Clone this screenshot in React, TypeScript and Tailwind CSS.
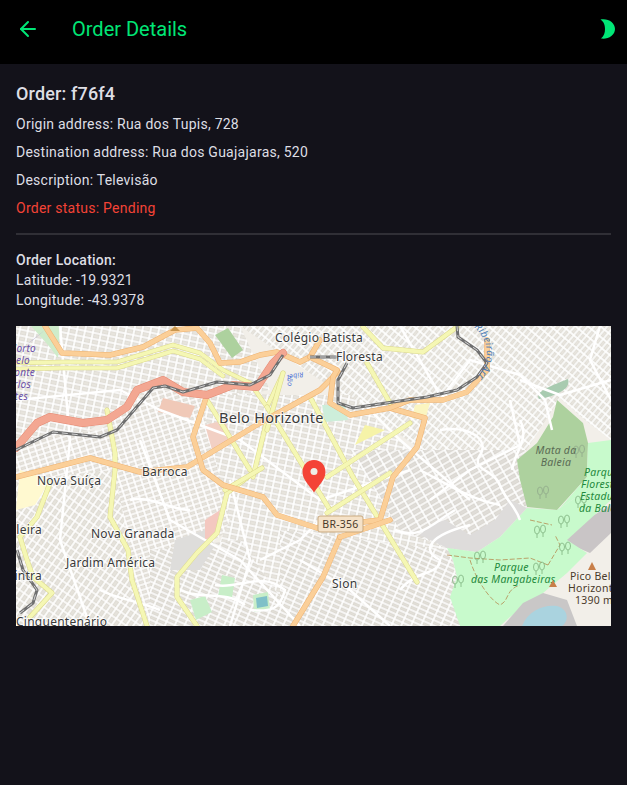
import React from 'react';
import { ArrowLeft } from 'lucide-react';

const Road = ({ d, casing, fill, w }: { d: string; casing: string; fill: string; w: number }) => (
  <>
    <path d={d} fill="none" stroke={casing} strokeWidth={w + 1} strokeLinecap="round" strokeLinejoin="round" />
    <path d={d} fill="none" stroke={fill} strokeWidth={w} strokeLinecap="round" strokeLinejoin="round" />
  </>
);

const ORANGE = [
  'M45 326L62 353L110 355L143 347L175 330L197 328L210 343L220 363L240 362L260 355L277 352L300 362L310 357L320 340',
  'M16 477L90 458L140 472L187 467L260 423L320 390L338 372',
  'M207 395L193 437L203 470L223 485L263 497L277 515L317 528L363 522L380 520L393 477L417 447L425 418L390 408',
  'M487 340L487 370L467 392L443 400L410 400L390 408L350 415L330 403L333 377L337 370L310 357',
  'M340 537L323 577L293 626',
  'M390 520L340 537',
];
const YELLOW = [
  'M16 363L63 362L117 362L173 345L200 353L223 370L250 383L267 407L283 373',
  'M16 369L63 368L117 368L173 351L200 359L223 376',
  'M107 410L115 453L115 470L110 517L128 550L132 580L147 626',
  'M257 470L227 493L217 533L197 553L177 577L177 597L197 626',
  'M50 483L37 517L20 537L27 560L33 577L52 593L30 617',
  'M207 400L250 470',
  'M267 420L253 477',
  'M267 407L330 510',
  'M310 397L353 477L417 582',
  'M327 513L390 473',
  'M327 477L410 423',
  'M363 327L383 348L423 352L457 327',
  'M367 363L390 403',
  'M283 373L267 430',
  'M225 490L262 468',
];
const PINK = 'M16 448L37 423L50 417L83 423L107 420L127 407L137 390L163 380L183 392L207 395L233 385L257 387L273 363L283 353';
const GREY = [
  'M16 450L53 432L100 437L117 430L153 388L165 386L183 392L217 382L250 385L270 375L283 355',
  'M347 363L338 380L338 403L353 408L393 402L427 397L457 390L477 377L487 363L477 350L458 337L457 326',
  'M310 357L338 357',
  'M17 550L23 570L37 590L33 603L20 613',
];
const STREETS = [
  'M16 400L120 390L160 410L240 440L320 500L410 470',
  'M60 326L70 440L60 540L90 626',
  'M140 440L170 520L240 560L300 626',
  'M230 480L250 560L230 626',
  'M440 400L470 360L520 375L545 400L552 430',
  'M430 500L470 470L520 445L510 400',
  'M300 560L350 590L390 626',
  'M360 400L400 440L470 500',
  'M520 380L560 395L611 380',
  'M600 326L590 360L611 400',
  'M400 326L440 395',
  'M260 560L300 540L330 510',
  'M440 430C470 425 490 440 480 455C470 470 495 470 500 485',
  'M500 485C505 500 515 505 520 520',
  'M400 590C415 570 440 575 440 560C420 550 430 535 470 525',
  'M215 585C240 590 260 570 285 590C280 610 270 612 250 610',
  'M180 590C200 600 225 590 245 605',
  'M130 500C150 495 170 510 190 510',
  'M100 590C120 600 135 600 160 610',
  'M395 530C420 540 430 525 455 510',
  'M420 470C440 480 470 500 500 505',
  'M520 420C530 440 515 450 512 470',
];

// street texture regions, filled with a rotated block pattern
const BLOCKS: [string, string][] = [
  ['16,326 240,326 270,390 210,400 140,395 90,430 16,450', 'url(#blocksA)'],
  ['16,440 100,430 150,390 280,395 270,500 215,540 150,626 16,626', 'url(#blocksB)'],
  ['16,480 115,470 135,580 150,626 16,626', 'url(#blocksC)'],
  ['240,326 611,326 611,440 585,420 560,398 520,460 450,470 350,400', 'url(#blocksD)'],
  ['200,395 350,395 430,470 490,520 440,560 400,626 180,626 230,520', 'url(#blocksA)'],
  ['280,530 450,550 470,626 280,626', 'url(#blocksE)'],
  ['150,550 240,540 300,626 150,626', 'url(#blocksE)'],
  ['350,450 525,450 530,505 477,552 447,548 400,530', 'url(#blocksF)'],
];

const Label = ({ x, y, size = 12, anchor, children }: { x: number; y: number; size?: number; anchor?: 'middle' | 'end'; children: React.ReactNode }) => (
  <text x={x} y={y} fontSize={size} textAnchor={anchor} fill="#3a3a3a" stroke="#ffffff" strokeOpacity={0.75} strokeWidth={2} paintOrder="stroke" fontFamily="'Noto Sans', sans-serif">
    {children}
  </text>
);

const Trees = ({ x, y, color = '#7fb27f' }: { x: number; y: number; color?: string }) => (
  <g fill="none" stroke={color} strokeWidth={0.8}>
    <ellipse cx={x} cy={y} rx={2.5} ry={4} />
    <path d={`M${x} ${y + 4}V${y + 8}`} />
    <ellipse cx={x + 6} cy={y - 1} rx={2.5} ry={4} />
    <path d={`M${x + 6} ${y + 3}V${y + 7}`} />
  </g>
);

const Blocks = ({ id, w, h, angle, fill }: { id: string; w: number; h: number; angle: number; fill: string }) => (
  <pattern id={id} width={w} height={h} patternUnits="userSpaceOnUse" patternTransform={`rotate(${angle})`}>
    <rect width={w} height={h} fill={fill} />
    <rect x={1} y={1} width={w - 2} height={h - 2} fill="none" stroke="#c9c5bd" strokeWidth={0.35} />
    <path d={`M0 0H${w}M0 ${h}H${w}M0 0V${h}M${w} 0V${h}`} stroke="#ffffff" strokeWidth={1.7} />
  </pattern>
);

const MapView = () => (
  <svg viewBox="16 326 595 300" className="block w-full h-[300px]" xmlns="http://www.w3.org/2000/svg">
    <defs>
      <Blocks id="blocksA" w={8} h={6} angle={12} fill="#e7e4dd" />
      <Blocks id="blocksB" w={7} h={5} angle={-18} fill="#e6e3dc" />
      <Blocks id="blocksC" w={6} h={8} angle={35} fill="#e5e2db" />
      <Blocks id="blocksD" w={8} h={5} angle={-50} fill="#e8e5de" />
      <Blocks id="blocksE" w={9} h={5} angle={24} fill="#e2dfd8" />
      <Blocks id="blocksF" w={10} h={6} angle={-30} fill="#dfdcd7" />
      <path id="arrudas" d="M474 327C488 340 492 358 478 376" />
      <path id="arrudasWest" d="M303 372L287 375L289 402" />
    </defs>

    <rect x="16" y="326" width="595" height="300" fill="#f2efe9" />
    {BLOCKS.map(([points, fill], i) => (
      <polygon key={i} points={points} fill={fill} />
    ))}

    {/* parks, quarries, water */}
    <polygon points="470,535 445,520 430,525 420,535 447,548 477,552 500,537 527,508 510,500 495,520" fill="#dedcdb" />
    <polygon points="175,540 205,530 215,545 200,570 170,570" fill="#dedddb" />
    <polygon points="555,538 611,505 611,533 590,553" fill="#c9c5c6" />
    <polygon points="447,548 477,552 500,537 527,508 557,510 587,490 611,477 611,500 567,540 587,553 567,573 543,593 510,617 500,626 460,626 450,597 457,577 453,560" fill="#c8facc" />
    <polygon points="557,400 583,423 588,443 587,477 557,510 527,507 520,480 517,460 537,443 553,417" fill="#add19e" />
    <polygon points="588,443 611,440 611,482 587,490 560,508 587,477" fill="#c8facc" />
    <polygon points="503,626 523,603 543,593 567,600 577,626" fill="#c9c7c7" />
    <path d="M522 626C528 610 545 604 557 606C570 610 568 622 562 626Z" fill="#aad3df" />
    <path d="M539 399C535 392 548 387 568 379C570 385 566 390 556 394C550 397 544 398 539 399Z" fill="#a8cbb0" />
    <polygon points="215,335 228,328 243,350 232,358" fill="#add19e" />
    <polygon points="31,326 60,326 58,358 48,345" fill="#cfeccb" />
    <polygon points="163,398 195,406 190,418 158,412" fill="#f0c9b8" />
    <polygon points="205,425 225,420 232,440 212,450" fill="#f2d0c4" />
    <polygon points="26,345 45,330 33,340" fill="#a9a3c9" />
    <polygon points="20,470 50,480 35,505 16,510" fill="#fff9d0" />
    <polygon points="322,405 345,405 348,420 325,422" fill="#cdeeda" />
    <polygon points="415,405 430,403 425,420 412,418" fill="#fbf5c0" />
    <polygon points="365,425 385,430 355,445" fill="#f6f3a8" />
    <polygon points="205,520 220,510 215,535 205,540" fill="#f4c8c0" />
    <polygon points="222,575 235,578 232,598 218,596" fill="#c8eec8" />
    <polygon points="190,600 205,596 212,612 196,620" fill="#c8eec8" />
    <polygon points="253,595 268,592 270,610 254,612" fill="#c8eec8" />
    <polygon points="256,598 267,596 268,606 257,608" fill="#7fc0c8" />

    {STREETS.map((d, i) => (
      <path key={i} d={d} fill="none" stroke="#ffffff" strokeWidth={2.5} strokeLinejoin="round" />
    ))}

    {YELLOW.map((d, i) => (
      <Road key={i} d={d} casing="#dcd98c" fill="#f5f7b4" w={i < 2 ? 3.5 : 4} />
    ))}
    {ORANGE.map((d, i) => (
      <Road key={i} d={d} casing="#eeb271" fill="#fbcf98" w={4.5} />
    ))}
    <Road d={PINK} casing="#e58a73" fill="#f3a792" w={7} />
    {GREY.map((d, i) => (
      <g key={i}>
        <path d={d} fill="none" stroke="#6f6f6f" strokeWidth={3} strokeLinejoin="round" />
        <path d={d} fill="none" stroke="#ffffff" strokeWidth={0.7} strokeDasharray="6 4" />
      </g>
    ))}

    <polygon points="170,331 175,326 180,331" fill="#c8964f" />

    {/* trail */}
    <path d="M447 555L470 558L500 560L530 558L548 565M470 560C476 580 490 600 500 605C510 600 505 590 520 585M548 565L560 545L555 535M530 520L552 525" fill="none" stroke="#b58b50" strokeWidth={0.8} strokeDasharray="5 2" />

    <Trees x={477} y={556} />
    <Trees x={536} y={567} />
    <Trees x={537} y={530} />
    <Trees x={561} y={520} />
    <Trees x={562} y={547} />
    <Trees x={540} y={491} color="#8fa88a" />
    <Trees x={578} y={500} />
    <Trees x={455} y={580} />
    <Trees x={576} y={450} color="#8fa88a" />

    {/* labels */}
    <Label x={219} y={423} size={14.500}>Belo Horizonte</Label>
    <Label x={275} y={342}>Colégio Batista</Label>
    <Label x={336} y={361}>Floresta</Label>
    <Label x={142} y={476}>Barroca</Label>
    <Label x={37} y={485}>Nova Suíça</Label>
    <Label x={91} y={538}>Nova Granada</Label>
    <Label x={66} y={567}>Jardim América</Label>
    <Label x={42} y={534} anchor="end">Gameleira</Label>
    <Label x={42} y={580} anchor="end">Calafate Pintra</Label>
    <Label x={16} y={626}>Cinquentenário</Label>
    <Label x={332} y={588}>Sion</Label>

    <g fontFamily="'Noto Sans', sans-serif" fontStyle="italic" fontSize={10} fill="#6a4fa8" textAnchor="end">
      <text x={36} y={352}>Horto</text>
      <text x={30} y={364}>Belo</text>
      <text x={35} y={376}>Horizonte</text>
      <text x={31} y={388}>Carlos</text>
      <text x={28} y={400}>Prates</text>
    </g>
    <g fontFamily="'Noto Sans', sans-serif" fontStyle="italic" fontSize={10.5} fill="#5a6b55" textAnchor="middle">
      <text x={556} y={454}>Mata da</text>
      <text x={556} y={466}>Baleia</text>
    </g>
    <g fontFamily="'Noto Sans', sans-serif" fontStyle="italic" fontSize={10.5} fill="#1f8a3c">
      <text x={584} y={476}>Parque</text>
      <text x={581} y={488}>Florestal</text>
      <text x={580} y={500}>Estadual</text>
      <text x={579} y={512}>da Baleia</text>
      <text x={494} y={571}>Parque</text>
      <text x={471} y={583}>das Mangabeiras</text>
    </g>
    <g fontFamily="'Noto Sans', sans-serif" fontSize={10.5} fill="#4a3a2a">
      <text x={570} y={580}>Pico Belo</text>
      <text x={568} y={592}>Horizonte</text>
      <text x={575} y={604}>1390 m</text>
    </g>
    <polygon points="588,570 592,562 596,570" fill="#c87f4a" />
    <polygon points="549,587 553,580 557,587" fill="#c87f4a" />
    <text fontFamily="'Noto Sans', sans-serif" fontStyle="italic" fontSize={10} fill="#4f7fb5">
      <textPath href="#arrudas">Ribeirão Arrudas</textPath>
    </text>
    <text fontFamily="'Noto Sans', sans-serif" fontStyle="italic" fontSize={7} fill="#4f6fd5">
      <textPath href="#arrudasWest">Ribeirão</textPath>
    </text>

    {/* route shield */}
    <rect x="318" y="516" width="45" height="16" rx="2" fill="#f5e2c8" stroke="#c9a97f" />
    <text x="340.5" y="528" textAnchor="middle" fontSize={10.5} fill="#4a3a2a" fontFamily="'Noto Sans', sans-serif">BR-356</text>

    {/* marker */}
    <path d="M314 460C307 460 302.500 465.500 302.500 472C302.500 480 310 486 314 492.500C318 486 325.500 480 325.500 472C325.500 465.500 321 460 314 460Z" fill="#f44336" />
    <circle cx="314" cy="471.500" r="3.500" fill="#eeeee6" />
  </svg>
);

const Moon = () => (
  <svg width="15" height="20" viewBox="0 0 15 20" className="block">
    <path d="M0.500 0.500C8 -1 15 3.500 15 10C15 16.500 8 20.500 1 19.500C4 17 5 14 5 10C5 6 4 3 0.500 0.500Z" fill="#00e676" />
  </svg>
);

export default function App() {
  return (
    <div className="h-[785px] bg-[#13121a] font-['Roboto',sans-serif] text-sm tracking-[0.25px] text-[#dedee4]">
      <header className="h-16 bg-black flex items-center justify-between pb-[7px] pl-4 pr-3 text-[#00e676] tracking-normal">
        <div className="flex items-center gap-[32px]">
          <ArrowLeft size={24} strokeWidth={2} />
          <h1 className="text-[20px] leading-7 font-normal">Order Details</h1>
        </div>
        <Moon />
      </header>

      <main className="px-4 pt-[19px]">
        <h2 className="text-lg leading-[22px] font-medium tracking-[0.15px] mb-[9px]">Order: f76f4</h2>
        <p className="leading-5 mb-2">Origin address: Rua dos Tupis, 728</p>
        <p className="leading-5 mb-2">Destination address: Rua dos Guajajaras, 520</p>
        <p className="leading-5 mb-2">Description: Televisão</p>
        <p className="leading-5 text-[#f44336]">Order status: Pending</p>
        <hr className="border-0 h-0.5 bg-[#302f36] mt-[15px] mb-[15px]" />
        <p className="leading-5 font-medium">Order Location:</p>
        <p className="leading-5">Latitude: -19.9321</p>
        <p className="leading-5">Longitude: -43.9378</p>
        <div className="mt-4 h-[300px] overflow-hidden">
          <MapView />
        </div>
      </main>
    </div>
  );
}
